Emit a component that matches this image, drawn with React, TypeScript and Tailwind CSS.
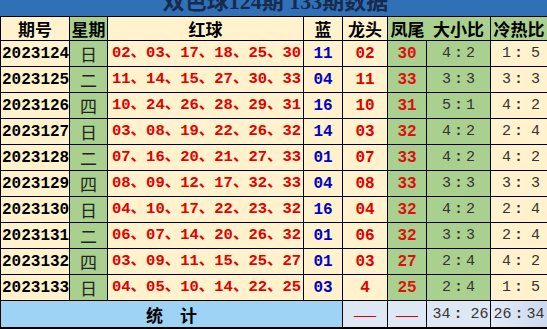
const rows: [string, string, string, string, string, string, string, string][] = [
  ["2023124", "日", "02、03、17、18、25、30", "11", "02", "30", "4：2", "1：5"],
  ["2023125", "二", "11、14、15、27、30、33", "04", "11", "33", "3：3", "3：3"],
  ["2023126", "四", "10、24、26、28、29、31", "16", "10", "31", "5：1", "4：2"],
  ["2023127", "日", "03、08、19、22、26、32", "14", "03", "32", "4：2", "2：4"],
  ["2023128", "二", "07、16、20、21、27、33", "01", "07", "33", "4：2", "4：2"],
  ["2023129", "四", "08、09、12、17、32、33", "04", "08", "33", "3：3", "3：3"],
  ["2023130", "日", "04、10、17、22、23、32", "16", "04", "32", "4：2", "2：4"],
  ["2023131", "二", "06、07、14、20、26、32", "01", "06", "32", "3：3", "2：4"],
  ["2023132", "四", "03、09、11、15、25、27", "01", "03", "27", "2：4", "4：2"],
  ["2023133", "日", "04、05、10、14、22、25", "03", "4", "25", "2：4", "1：5"],
];

const mono = "font-['Liberation_Mono','Noto_Sans_CJK_SC',monospace]";
const cjk = "font-['Noto_Sans_CJK_SC',sans-serif]";
const cols = "grid grid-cols-[68px_37px_195px_38px_44px_38px_63px_56px] gap-x-px";

// "4：2" style ratio, colon centred in a full-width slot
function Ratio({ v, wide }: { v: string; wide?: boolean }) {
  const [a, b] = v.split("：");
  return (
    <span className={`flex items-center ${mono} text-[15px] text-[#333]`}>
      {a}
      <span className={`inline-block w-[15px] text-center font-bold ${wide ? "mr-[5px]" : ""}`}>:</span>
      {b}
    </span>
  );
}

export default function App() {
  return (
    <div className="h-[329px] w-[547px] overflow-hidden bg-[#fff2cc]">
      <div className="flex flex-col gap-y-px bg-black pl-px">
        <div className="-ml-px flex h-[16px] justify-center overflow-hidden bg-[#2f70b6]">
          <div className="-mt-[9px] pl-[4px] font-['Liberation_Serif','Noto_Sans_CJK_SC',serif] text-[22px] font-bold leading-[22px] text-[#182a4e]">
            双色球124期 133期数据
          </div>
        </div>

        <div className={`${cols} h-[23px] ${cjk} text-[17px] font-bold leading-none text-black`}>
          <div className="flex items-center justify-center bg-[#fff2cc]">期号</div>
          <div className="flex items-center justify-center bg-[#a9d08e]">星期</div>
          <div className="flex items-center justify-center bg-[#fff2cc]">红球</div>
          <div className="flex items-center justify-center bg-[#fff2cc]">蓝</div>
          <div className="flex items-center justify-center bg-[#fff2cc]">龙头</div>
          <div className="col-span-2 flex items-center bg-[#a9d08e]">
            <div className="flex w-[39px] justify-center">凤尾</div>
            <div className="flex flex-1 justify-center">大小比</div>
          </div>
          <div className="flex items-center justify-center bg-[#a9d08e]">冷热比</div>
        </div>

        {rows.map(([qi, day, reds, blue, head, tail, dx, lr]) => (
          <div key={qi} className={`${cols} h-[25px] leading-none`}>
            <div className={`flex items-center bg-[#fff2cc] pl-[1px] ${mono} text-[16px] font-bold text-black`}>
              {qi}
            </div>
            <div className={`flex items-center justify-center bg-[#a9d08e] ${cjk} text-[17px] text-[#222]`}>
              {day}
            </div>
            <div className={`flex items-center bg-[#fff2cc] pl-[4px] ${mono} text-[15.5px] font-bold text-[#e00000]`}>
              {reds}
            </div>
            <div className={`flex items-center justify-center bg-[#fff2cc] ${mono} text-[16px] font-bold text-[#0000cc]`}>
              {blue}
            </div>
            <div className={`flex items-center justify-center bg-[#fff2cc] ${mono} text-[16px] font-bold text-[#e00000]`}>
              {head}
            </div>
            <div className={`flex items-center justify-center bg-[#a9d08e] ${mono} text-[16px] font-bold text-[#dd1010]`}>
              {tail}
            </div>
            <div className="flex items-center justify-center bg-[#a9d08e]">
              <Ratio v={dx} />
            </div>
            <div className="flex items-center justify-center bg-[#fff2cc] pl-[4px]">
              <Ratio v={lr} wide />
            </div>
          </div>
        ))}

        <div className="grid h-[26px] grid-cols-[341px_44px_38px_63px_56px] gap-x-px leading-none">
          <div className={`flex items-center justify-center bg-[#9fd3f6] ${cjk} text-[17px] font-bold text-black`}>
            统　计
          </div>
          <div className={`flex items-center justify-center bg-[#dde8f4] ${cjk} text-[14px] text-[#e00000]`}>
            ——
          </div>
          <div className={`flex items-center justify-center bg-[#dde8f4] ${cjk} text-[14px] text-[#e00000]`}>
            ——
          </div>
          <div className="flex items-center justify-center bg-[#dde8f4] pl-[4px]">
            <Ratio v="34：26" wide />
          </div>
          <div className="flex items-center justify-center bg-gradient-to-r from-[#e2ebf6] to-[#ccd9ee]">
            <Ratio v="26：34" />
          </div>
        </div>
        <div className="h-px bg-black" />
      </div>
    </div>
  );
}
